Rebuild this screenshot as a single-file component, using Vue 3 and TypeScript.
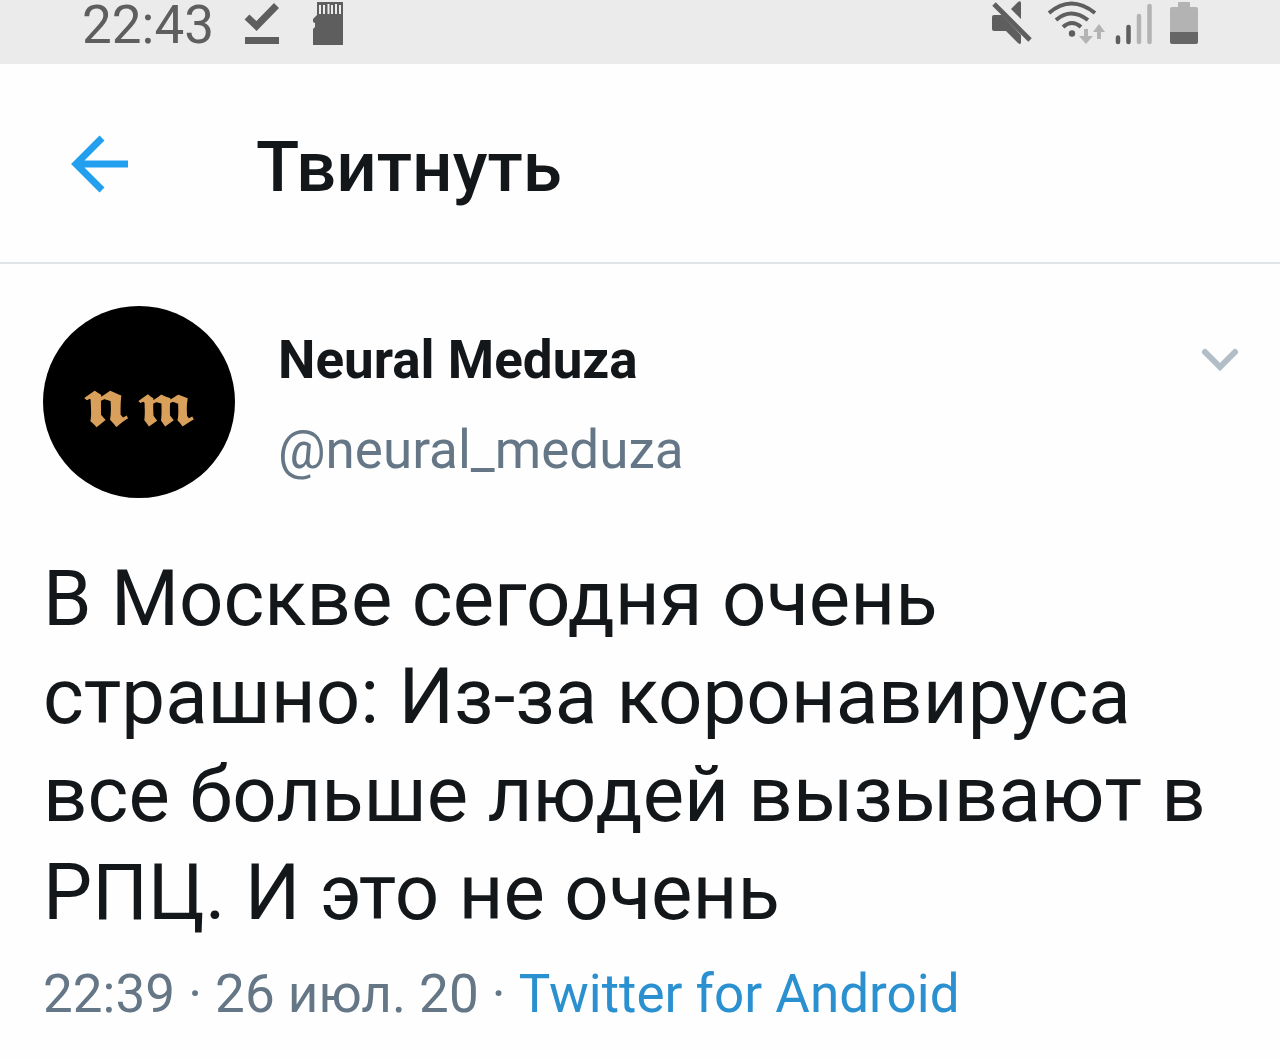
<script setup lang="ts">
interface Tweet {
  name: string
  handle: string
  text: string
  time: string
  date: string
  source: string
}

const clock = '22:43'
const title = 'Твитнуть'

const tweet: Tweet = {
  name: 'Neural Meduza',
  handle: '@neural_meduza',
  text: 'В Москве сегодня очень страшно: Из-за коронавируса все больше людей вызывают в РПЦ. И это не очень',
  time: '22:39',
  date: '26 июл. 20',
  source: 'Twitter for Android',
}
</script>

<template>
  <div class="screen">
    <div class="status">
      <div class="status-group">
        <time class="clock">{{ clock }}</time>
        <svg class="done" width="36" height="48" viewBox="0 0 36 48" aria-hidden="true">
          <path d="M3 17L12.500 26L32.500 5.500" fill="none" stroke="#5e5e5e" stroke-width="7" />
          <rect x="1" y="37" width="34" height="7" fill="#5e5e5e" />
        </svg>
        <svg class="card" width="32" height="48" viewBox="0 0 32 48" aria-hidden="true">
          <path d="M5 2H31V45H1V29L3 27V23L1 22V19L5 15Z" fill="#5e5e5e" />
          <path d="M8 5V14M12 5V14M16.500 4V14M20 5V14M24 4V14M28 5V14" stroke="#ececec" stroke-width="2" />
        </svg>
      </div>
      <div class="status-group">
        <svg width="42" height="48" viewBox="0 0 42 48" aria-hidden="true">
          <path d="M1 17Q1 15 3 15H11L30 35V43Q29 45 27 43L15 31H3Q1 31 1 29ZM20 9L27 2Q30 0 30 3V19Z" fill="#5e5e5e" />
          <path d="M3 4L39 40" stroke="#5e5e5e" stroke-width="5" />
        </svg>
        <svg class="wifi" width="58" height="48" viewBox="0 0 58 48" aria-hidden="true">
          <g fill="none" stroke="#5e5e5e" stroke-width="4">
            <path d="M2 13Q24 -6 48 13" />
            <path d="M9 20Q24 7 41 20" />
            <path d="M16 27Q25 19 34 27" />
          </g>
          <circle cx="25" cy="33.500" r="3.200" fill="#5e5e5e" />
          <path d="M37 29h4v7h5l-7 8-7-8h5zM50 39h4v-7h4l-6-8-6 8h4z" fill="#b3b3b3" />
        </svg>
        <svg class="signal" width="38" height="48" viewBox="0 0 38 48" aria-hidden="true">
          <g stroke-width="4.500" stroke-linecap="round">
            <path d="M3 37.500V42M13.500 27V42" stroke="#5e5e5e" />
            <path d="M24 16V42M34.500 6V42" stroke="#b3b3b3" />
          </g>
        </svg>
        <svg class="battery" width="30" height="48" viewBox="0 0 30 48" aria-hidden="true">
          <path d="M10 2H20Q21 2 21 3V7H27Q29 7 29 10V33H1V10Q1 7 3 7H9V3Q9 2 10 2Z" fill="#b3b3b3" />
          <path d="M1 32H29V42Q29 44 27 44H3Q1 44 1 42Z" fill="#666" />
        </svg>
      </div>
    </div>

    <header class="bar">
      <button class="back" type="button" aria-label="Назад">
        <svg width="60" height="60" viewBox="0 0 60 60" aria-hidden="true">
          <path d="M58 31H8M32 5L6 31L32 57" fill="none" stroke="#239ff0" stroke-width="7" />
        </svg>
      </button>
      <h1>{{ title }}</h1>
    </header>

    <main class="tweet">
      <div class="author">
        <div class="avatar"><span>𝖓</span><span class="second">𝖒</span></div>
        <div class="names">
          <div class="name">{{ tweet.name }}</div>
          <div class="handle">{{ tweet.handle }}</div>
        </div>
        <button class="more" type="button" aria-label="Ещё">
          <svg width="40" height="28" viewBox="0 0 40 28" aria-hidden="true">
            <path d="M5 6L20 21L35 6" fill="none" stroke="#b1bec8" stroke-width="6" stroke-linecap="round" />
          </svg>
        </button>
      </div>
      <p class="text">{{ tweet.text }}</p>
      <p class="meta">{{ tweet.time }} · {{ tweet.date }} · <a href="#">{{ tweet.source }}</a></p>
    </main>
  </div>
</template>

<style>
body {
  margin: 0;
  background: #fefefe;
}
</style>

<style scoped>
.screen {
  font-family: Roboto, "Noto Sans", sans-serif;
  color: #14171a;
}
svg {
  display: block;
  flex: none;
}
button {
  padding: 0;
  border: 0;
  background: none;
  cursor: pointer;
}
.status {
  display: flex;
  justify-content: space-between;
  height: 64px;
  padding: 0 81px 0 82px;
  background: #ebebeb;
}
.status-group {
  display: flex;
  align-items: flex-start;
}
.clock {
  font-size: 53px;
  line-height: 50px;
  color: #5e5e5e;
}
.done {
  margin-left: 30px;
}
.card {
  margin-left: 32px;
}
.wifi {
  margin-left: 14px;
}
.signal {
  margin-left: 10px;
}
.battery {
  margin-left: 16px;
}
.bar {
  display: flex;
  align-items: center;
  gap: 126px;
  height: 198px;
  padding: 0 70px;
  border-bottom: 2px solid #e1e4e6;
}
h1 {
  margin: 0;
  padding-top: 8px;
  font-size: 71px;
  line-height: 84px;
  font-weight: 500;
}
.tweet {
  padding: 42px 40px 24px 43px;
}
.author {
  display: flex;
  align-items: flex-start;
}
.avatar {
  display: flex;
  box-sizing: border-box;
  flex: none;
  align-items: baseline;
  justify-content: center;
  gap: 4px;
  width: 192px;
  height: 192px;
  padding-top: 64px;
  border-radius: 50%;
  background: #000;
  color: #d9a05b;
  font-family: "DejaVu Math TeX Gyre", "DejaVu Sans", "DejaVu Serif", serif;
  font-size: 60px;
  font-weight: 700;
  line-height: 72px;
}
.second {
  font-size: 53px;
}
.names {
  flex: 1;
  padding: 20px 0 0 43px;
}
.name {
  font-size: 53px;
  line-height: 68px;
  font-weight: 700;
}
.handle {
  margin-top: 22px;
  font-size: 53px;
  line-height: 68px;
  color: #657786;
}
.more {
  margin-top: 40px;
}
.text {
  margin: 52px 0 0;
  font-size: 78px;
  line-height: 98px;
}
.meta {
  margin: 18px 0 0;
  font-size: 53px;
  line-height: 68px;
  color: #657786;
}
.meta a {
  color: #2b90d0;
  text-decoration: none;
}
</style>
